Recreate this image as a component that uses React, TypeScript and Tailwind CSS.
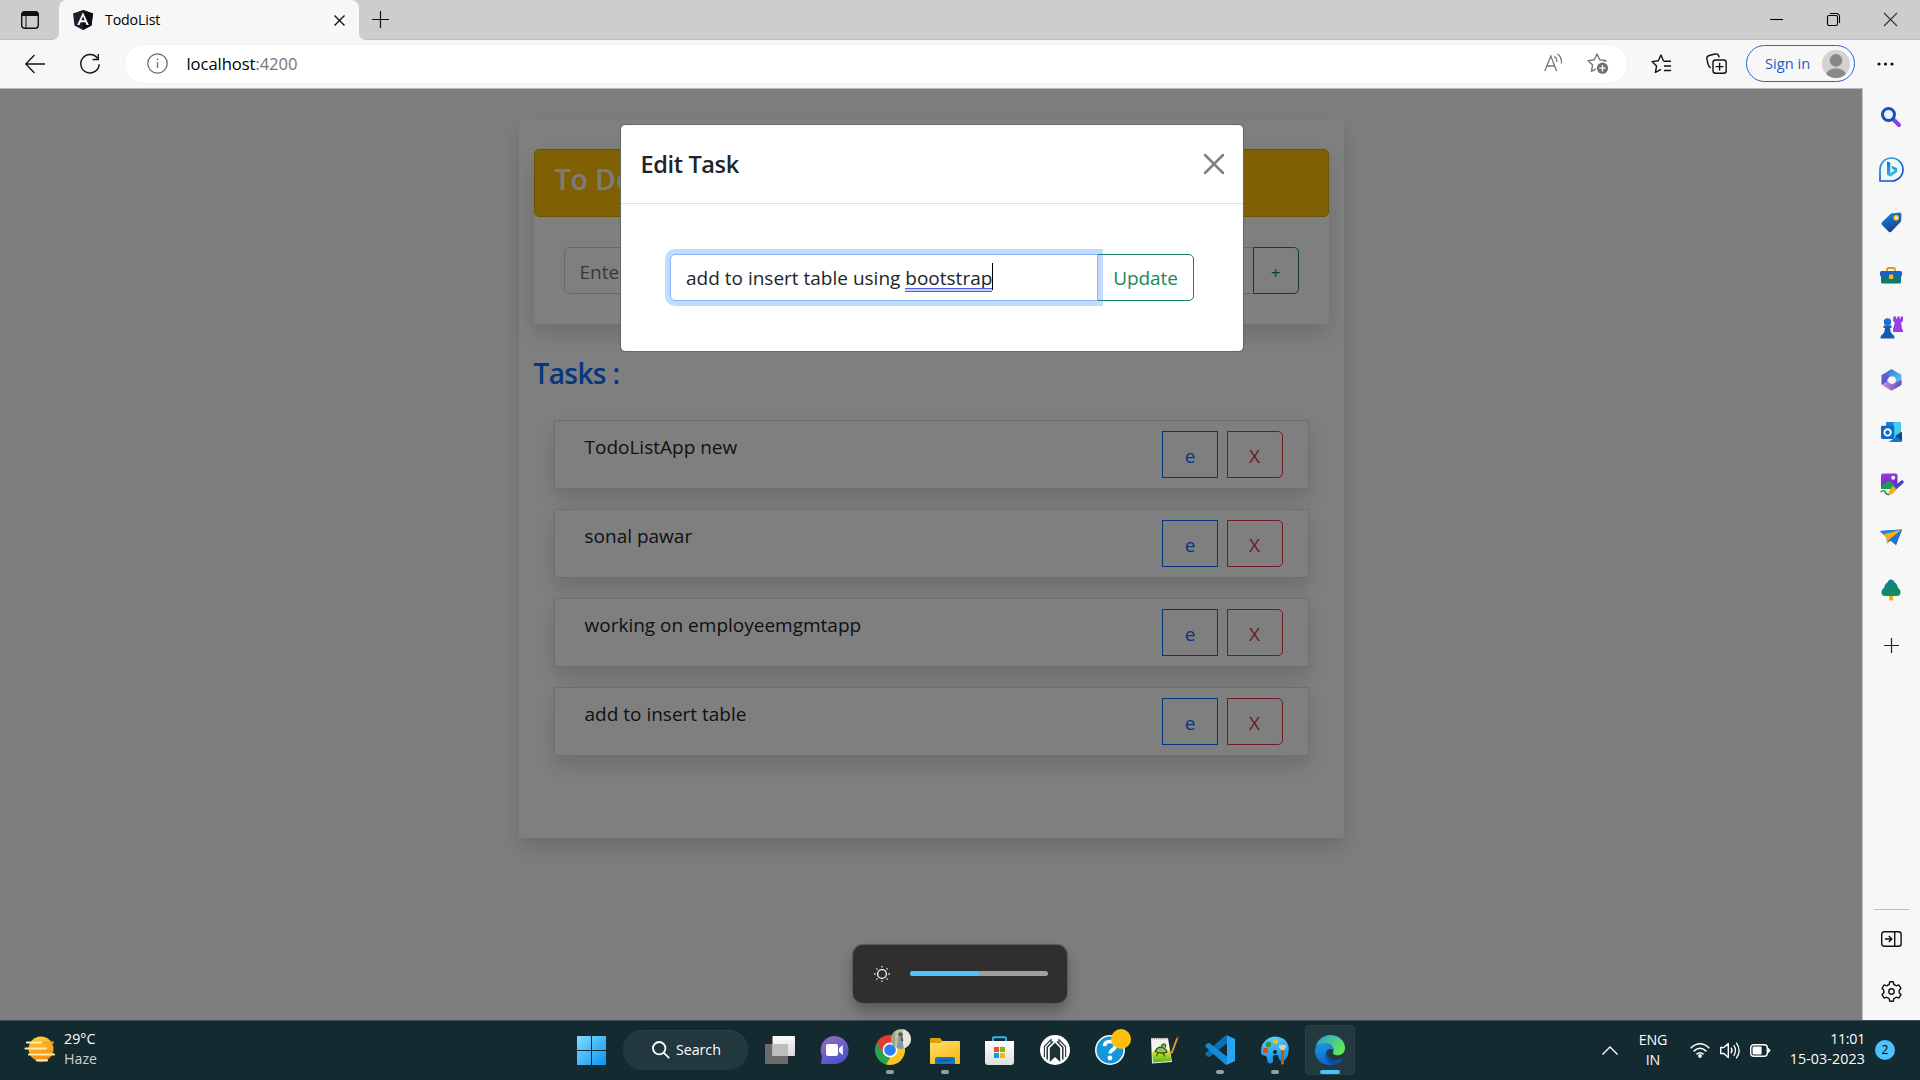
import React from "react";
import type { ReactNode } from "react";

type IconProps = { w: number; h?: number; vb?: string; className?: string; children: ReactNode };

function Icon({ w, h = w, vb, className = "", children }: IconProps) {
  return (
    <svg width={w} height={h} viewBox={vb ?? `0 0 ${w} ${h}`} fill="none" className={`block shrink-0 overflow-visible ${className}`}>
      {children}
    </svg>
  );
}

function Grad({ id, a, b, x2 = 1, y2 = 1 }: { id: string; a: string; b: string; x2?: number; y2?: number }) {
  return (
    <linearGradient id={id} x1="0" y1="0" x2={x2} y2={y2}>
      <stop stopColor={a} />
      <stop offset="1" stopColor={b} />
    </linearGradient>
  );
}

const STAR = "M10 1 L12.7 6.8 L19 7.6 L14.4 12 L15.6 18.4 L10 15.3 L4.4 18.4 L5.6 12 L1 7.6 L7.3 6.8 Z";

function TabStrip() {
  return (
    <div className="flex h-10 shrink-0 items-stretch bg-[#cdcdcd] shadow-[inset_0_-1px_0_#bdbdbd]">
      <div className="flex w-[59px] items-center pl-[21px]">
        <Icon w={18}>
          <rect x="0.7" y="0.7" width="16.6" height="16.6" rx="3" stroke="#111" strokeWidth="1.4" />
          <path d="M0.5 5V3.5A3 3 0 0 1 3.5 0.5h11a3 3 0 0 1 3 3V5Z" fill="#111" />
          <path d="M5 5v12" stroke="#111" strokeWidth="1" />
        </Icon>
      </div>
      <div className="relative flex w-[300px] items-center rounded-t-[8px] bg-[#f7f7f7] pl-[14px] pr-[14px]">
        <div className="absolute bottom-0 -left-[6px] size-[6px] bg-[radial-gradient(circle_at_0_0,#cdcdcd_5.5px,#f7f7f7_6px)]" />
        <div className="absolute -right-[6px] bottom-0 size-[6px] bg-[radial-gradient(circle_at_100%_0,#cdcdcd_5.5px,#f7f7f7_6px)]" />
        <Icon w={20}>
          <path d="M10 0 L20 3.4 L18.5 15.6 L10 20 L1.5 15.6 L0 3.4 Z" fill="#1c1f2b" />
          <path d="M10 0 L20 3.4 L18.5 15.6 L10 20 Z" fill="#0c0e16" />
          <path fillRule="evenodd" d="M10 2.2 L4.2 15 H6.5 L7.6 12.2 H12.4 L13.5 15 H15.8 Z M10 6.3 L11.6 10.3 H8.4 Z" fill="#fff" />
        </Icon>
        <span className="ml-[12px] flex-1 text-[14.2px] leading-5 tracking-[-0.15px] text-black">TodoList</span>
        <Icon w={11} className="mt-px">
          <path d="M0.5 0.5 L10.5 10.5 M10.5 0.5 L0.5 10.5" stroke="#111" strokeWidth="1.4" />
        </Icon>
      </div>
      <div className="flex flex-1 items-center pb-px pl-[13px]">
        <Icon w={17}>
          <path d="M8.5 0V17 M0 8.5H17" stroke="#111" strokeWidth="1.2" />
        </Icon>
      </div>
      <div className="flex items-center gap-[44px] pb-px pr-[23px]">
        <Icon w={13}>
          <path d="M0 6.5H13" stroke="#000" strokeWidth="1.1" />
        </Icon>
        <Icon w={13}>
          <rect x="0.5" y="2.5" width="10" height="10" rx="1.5" stroke="#000" strokeWidth="1.1" />
          <path d="M3 0.5H9.5A3 3 0 0 1 12.5 3.5V10" stroke="#000" strokeWidth="1.1" />
        </Icon>
        <Icon w={13}>
          <path d="M0 0 L13 13 M13 0 L0 13" stroke="#333" strokeWidth="1.1" />
        </Icon>
      </div>
    </div>
  );
}

function Toolbar() {
  return (
    <div className="flex h-12 shrink-0 items-start bg-[#f7f7f7] pl-[25px] pt-[5px]">
      <div className="flex h-[38px] items-center pb-px">
        <Icon w={20}>
          <path d="M20 10H1 M9.5 1 L0.8 10 L9.5 19" stroke="#111" strokeWidth="1.3" />
        </Icon>
        <Icon w={20} className="ml-[35px]">
          <path d="M17.5 4.4A9.2 9.2 0 1 0 19.2 10.2" stroke="#111" strokeWidth="1.4" />
          <path d="M18.3 0V5.5H12.6" stroke="#111" strokeWidth="1.4" />
        </Icon>
      </div>
      <div className="ml-[25px] flex h-[38px] w-[1502px] items-center rounded-full bg-white pb-px pl-[22px] pr-[18px] shadow-[0_0_3px_rgba(0,0,0,0.06)]">
        <Icon w={21}>
          <circle cx="10.5" cy="10.5" r="9.7" stroke="#6b6b6b" strokeWidth="1.3" />
          <path d="M10.5 9.2V15" stroke="#6b6b6b" strokeWidth="1.3" />
          <circle cx="10.5" cy="6.3" r="0.9" fill="#6b6b6b" />
        </Icon>
        <span className="ml-[18.5px] flex-1 text-[16.6px] leading-6 tracking-[-0.07px] text-black">
          localhost<span className="text-[#767676]">:4200</span>
        </span>
        <Icon w={19}>
          <path d="M0.8 17 L6.8 2 L12.6 17 M3 12H10.6" stroke="#767676" strokeWidth="1.3" />
          <path d="M10.3 2.2Q13 4 12.8 8 M13.5 0Q17.8 3 17.5 9.5" stroke="#767676" strokeWidth="1.3" />
        </Icon>
        <Icon w={22} h={21} className="ml-[24.5px]">
          <path d={STAR} stroke="#767676" strokeWidth="1.4" strokeLinejoin="round" />
          <circle cx="15.5" cy="15.2" r="6.8" fill="#fff" />
          <circle cx="15.5" cy="15.2" r="5.6" fill="#707070" />
          <path d="M15.5 12V18.4 M12.3 15.2H18.7" stroke="#fff" strokeWidth="1.3" />
        </Icon>
      </div>
      <div className="flex h-[38px] items-center pb-px">
        <Icon w={21} h={20} className="ml-[24px]">
          <path d="M13 6.8L12.4 6.8L10 1L7.3 6.8L1 7.6L5.6 12L4.4 18.4L10 15.3" stroke="#111" strokeWidth="1.4" strokeLinejoin="round" />
          <path d="M13 7.3H20 M13 12H20 M13 16.5H20" stroke="#111" strokeWidth="1.4" />
        </Icon>
        <Icon w={21} h={21} className="ml-[33.5px]">
          <path d="M4.8 14.8C3 14 2.6 13 2.2 11.5L0.9 6C0.5 4 1.4 3 3.2 2.5L9 1C11.4 0.4 12.5 1.5 13.2 4.5" stroke="#111" strokeWidth="1.4" />
          <rect x="7" y="7" width="13.2" height="13.2" rx="2.5" stroke="#111" strokeWidth="1.4" />
          <path d="M13.6 9.7V17.5 M9.7 13.6H17.5" stroke="#111" strokeWidth="1.4" />
        </Icon>
        <div className="ml-[19.5px] flex h-[37px] w-[109px] items-center rounded-full border-[1.5px] border-[#2c66c9] pl-[18px]">
          <span className="-mt-px text-[14.6px] leading-5 tracking-[0.05px] text-[#1b5ac6]">Sign in</span>
          <Icon w={28} className="ml-[12px]">
            <clipPath id="avatar"><circle cx="14" cy="14" r="14" /></clipPath>
            <g clipPath="url(#avatar)">
              <rect width="28" height="28" fill="#d4d2d0" />
              <circle cx="14" cy="10.4" r="6.3" fill="#8a8886" />
              <ellipse cx="14" cy="25.3" rx="9.8" ry="7" fill="#8a8886" />
            </g>
          </Icon>
        </div>
        <Icon w={17} h={4} className="ml-[21.5px]">
          <circle cx="2" cy="2" r="1.6" fill="#111" />
          <circle cx="8.5" cy="2" r="1.6" fill="#111" />
          <circle cx="15" cy="2" r="1.6" fill="#111" />
        </Icon>
      </div>
    </div>
  );
}

const TASKS = ["TodoListApp new", "sonal pawar", "working on employeemgmtapp", "add to insert table"];

function TodoPage() {
  return (
    <div className="mx-auto mt-[30px] h-[719px] w-[825px] bg-white px-[15px] pt-[30px] shadow-[0_10px_20px_rgba(0,0,0,0.15)]">
      <div className="shadow-[0_10px_20px_rgba(0,0,0,0.15)]">
        <div className="h-[68px] rounded-[5px] border border-[#dfa800] bg-[#ffc107] pl-5 pt-[11px] text-[28.5px] font-semibold leading-9 tracking-[-0.1px] text-[#f8f9fa]">
          To Do
        </div>
        <div className="flex h-[107px] bg-white p-[30px]">
          <div className="flex h-[47px] flex-1 items-center rounded-l-[5px] border border-[#ced4da] pl-[15px] pt-[3px] text-[19px] text-[#6c757d]">
            Enter
          </div>
          <div className="-ml-px flex h-[47px] w-[46px] items-center justify-center rounded-r-[5px] border border-[#198754] pt-[5px] text-[17px] text-[#198754]">
            +
          </div>
        </div>
      </div>
      <h4 className="mt-[31px] text-[28px] font-semibold leading-9 tracking-[-0.6px] text-[#0d6efd]">Tasks :</h4>
      <div className="mt-[29px] flex flex-col gap-5 px-5">
        {TASKS.map((task) => (
          <div key={task} className="flex h-[69px] items-start border border-[#dfdfdf] bg-white pl-[30px] pr-[25px] pt-[10px] shadow-[0_10px_20px_rgba(0,0,0,0.15)]">
            <span className="mt-[0.5px] flex-1 text-[19px] leading-[30px] text-[#212529]">{task}</span>
            <div className="flex gap-[9px] text-[19px]">
              <div className="flex h-[47px] w-[56px] items-center justify-center border border-[#0d6efd] pl-px pt-[3.5px] text-[#0d6efd]">e</div>
              <div className="flex h-[47px] w-[56px] items-center justify-center rounded-r-[5px] border border-[#dc3545] pt-[3.5px] text-[#dc3545]">X</div>
            </div>
          </div>
        ))}
      </div>
    </div>
  );
}

function EditDialog() {
  return (
    <div className="w-[624px] overflow-hidden rounded-[5px] border border-[#666] bg-white bg-clip-padding">
      <div className="flex h-[79px] items-center justify-between border-b border-[#dee2e6] pl-[19.5px] pr-[19.5px]">
        <h5 className="pt-[2px] text-[23.6px] font-semibold tracking-[-0.4px] text-[#212529]">Edit Task</h5>
        <Icon w={20}>
          <path d="M1 1 L19 19 M19 1 L1 19" stroke="#7f7f7f" strokeWidth="2.5" strokeLinecap="round" />
        </Icon>
      </div>
      <div className="flex h-[147px] items-start px-[49px] pt-[50px]">
        <div className="relative z-10 flex h-[47px] flex-1 items-center rounded-l-[5px] border border-[#86b7fe] bg-white pl-[15px] pt-[1.5px] text-[19px] text-[#212529] shadow-[0_0_0_5px_rgba(13,110,253,0.25)]">
          <span className="whitespace-pre">add to insert table using </span>
          <span className="relative">
            bootstrap
            <span className="absolute bottom-[1px] left-0 h-[4px] w-full border-y border-[#4a63e8] bg-[#4a63e8]/30" />
          </span>
          <span className="-mt-[4px] h-[27px] w-px bg-black" />
        </div>
        <div className="-ml-px flex h-[47px] w-[97px] items-center justify-center rounded-r-[5px] border border-[#198754] pt-[1.5px] text-[19px] tracking-[-0.1px] text-[#198754]">
          Update
        </div>
      </div>
    </div>
  );
}

function Cell({ children }: { children: ReactNode }) {
  return <div className="flex h-[52.5px] items-center justify-center">{children}</div>;
}

function Sidebar() {
  return (
    <div className="flex w-[58px] shrink-0 flex-col border-l border-[#c4c4c4] bg-[#f7f7f7] pr-px pt-[3px]">
      <Cell>
        <Icon w={20}>
          <path d="M13 13L18 18" stroke="#8b3fe8" strokeWidth="4" strokeLinecap="round" />
          <circle cx="7.5" cy="7.5" r="6" stroke="#1650b8" strokeWidth="3" fill="#e8f4ff" />
        </Icon>
      </Cell>
      <Cell>
        <Icon w={25}>
          <defs><Grad id="bing" a="#27a7e8" b="#1b4ec4" x2={0.4} /><Grad id="bingb" a="#1c62d8" b="#35c1ee" x2={0.2} /></defs>
          <path d="M1 24V12.5A11.5 11.5 0 1 1 12.5 24Z" fill="#eefaff" stroke="url(#bing)" strokeWidth="1.7" strokeLinejoin="round" />
          <path d="M8 4.5L11.3 5.8V16L16 13.5L13.6 12.3L12.2 8.8L18.2 11.2V15L11.3 19.8L8 17.8Z" fill="url(#bingb)" />
        </Icon>
      </Cell>
      <Cell>
        <Icon w={21}>
          <defs><Grad id="tag" a="#1b8be0" b="#14419c" x2={0.4} /></defs>
          <path d="M10 1.5L18.5 0.5Q20.5 0.4 20.5 2.5L20 9.5L10.5 19.6Q9.2 21 7.8 19.7L1 13Q-0.3 11.5 1 10.2Z" fill="url(#tag)" />
          <circle cx="15.2" cy="5.8" r="2.2" fill="#f7f7f7" stroke="#f5b800" strokeWidth="1.4" />
        </Icon>
      </Cell>
      <Cell>
        <Icon w={22} h={17} className="mt-[2px]">
          <path d="M7 5V2.5Q7 1 8.5 1H13.5Q15 1 15 2.5V5" stroke="#e59a16" strokeWidth="1.8" />
          <rect x="1" y="4.5" width="20" height="12" rx="1.5" fill="#0c7a6c" />
          <rect x="0" y="4" width="22" height="5.5" rx="1.5" fill="#1c5fcb" />
          <rect x="9" y="7.5" width="4.2" height="4.5" rx="1" fill="#ffb91d" />
        </Icon>
      </Cell>
      <Cell>
        <Icon w={23} h={23}>
          <path d="M13.5 0.5H16V2.5H17.2V0.5H19.6V2.5H20.8V0.5H23V5L21.2 6.5L22 13.5H23V16H13V13.5L14.8 6.5L13 5Z" fill="#9a3fe8" />
          <circle cx="7.5" cy="6" r="3.7" fill="#1d6fd4" />
          <path d="M3.5 9.5H11.5V12H10Q10 16 12.5 18.5Q14.5 19 14.5 22.5H0.5Q0.5 19 2.5 18.5Q5 16 5 12H3.5Z" fill="#1659b5" />
        </Icon>
      </Cell>
      <Cell>
        <Icon w={21} h={22}>
          <defs><Grad id="m3a" a="#2b79cf" b="#65d2f5" /><Grad id="m3b" a="#7d63d8" b="#3e55be" x2={0.1} /><Grad id="m3c" a="#d39ae6" b="#7052b8" x2={0.9} y2={0.1} /></defs>
          <path d="M0.5 6L10.5 0.2L13.5 2L11 8L6.5 10V18L0.5 15.5Z" fill="url(#m3b)" />
          <path d="M7 2.2L10.5 0.2L20.5 5.8V15.5L14.5 13V9L7 6Z" fill="url(#m3a)" />
          <path d="M0.5 15.8L7 11.8L11 15L20.5 11V16L10.5 21.8Z" fill="url(#m3c)" />
          <path d="M8.5 7.5H13L15 11L12.8 14.5H8.5L6.5 11Z" fill="#f7f7f7" />
        </Icon>
      </Cell>
      <Cell>
        <Icon w={21} h={20}>
          <rect x="5" y="0" width="15" height="15" rx="1" fill="#50c8f4" />
          <path d="M5 0H12.5V8H5Z" fill="#1683d4" />
          <path d="M8 20L21 10V19Q21 20 20 20Z" fill="#1c74ca" />
          <path d="M14 14L21 9.5V19Z" fill="#0b4d95" />
          <rect x="0" y="3.8" width="13.2" height="13.2" rx="1.4" fill="#0a6cc6" />
          <circle cx="6.6" cy="10.4" r="3.2" stroke="#fff" strokeWidth="1.9" />
        </Icon>
      </Cell>
      <Cell>
        <Icon w={23} h={23}>
          <defs><Grad id="pic" a="#a33be8" b="#6a22c8" x2={0.3} /></defs>
          <rect x="1" y="0.5" width="16.5" height="15.5" rx="2" fill="url(#pic)" />
          <path d="M1 13.5L7 8.5Q8.7 7.3 10.5 8.5L16 13.5V16H1Z" fill="#1b9e52" />
          <circle cx="13.2" cy="4.8" r="2" fill="#fff" />
          <path d="M13 17L22 9" stroke="#4242c8" strokeWidth="3.5" strokeLinecap="round" />
          <path d="M16 15.5L13 13L9.5 17Q9 20.5 6.5 21.5Q13 23.5 16 15.5Z" fill="#f5ad1c" />
          <path d="M0.5 19Q4 16.5 5 18.5Q5.5 21 9 22" stroke="#168848" strokeWidth="1.3" />
        </Icon>
      </Cell>
      <Cell>
        <Icon w={22} h={16}>
          <path d="M0 2L22 0.5L16 16L10.5 11.5L7 14.5L6.5 8.5Z" fill="#1765c0" />
          <path d="M0 2L22 0.5L6.5 8.5Z" fill="#2182d8" />
          <path d="M3 5.5L22 0.5L9.5 10.5L7 14.5L6.5 8.5Z" fill="#f7af20" />
          <path d="M9.5 10.5L22 0.5L16 16Z" fill="#1975d2" />
        </Icon>
      </Cell>
      <Cell>
        <Icon w={20} h={22}>
          <defs><Grad id="tree" a="#1479a8" b="#119057" x2={0.5} /></defs>
          <rect x="8.2" y="15" width="3.8" height="6.5" rx="1" fill="#f5a71c" />
          <path d="M10 0.5Q12.5 0.5 13.5 3.5Q16.5 5 16.5 8Q19.5 10.5 19.5 13.5Q19.5 17 15.5 17H4.5Q0.5 17 0.5 13.5Q0.5 10.5 3.5 8Q3.5 5 6.5 3.5Q7.5 0.5 10 0.5Z" fill="url(#tree)" />
        </Icon>
      </Cell>
      <div className="mt-[3px]">
        <Cell>
          <Icon w={15}>
            <path d="M7.5 0V15 M0 7.5H15" stroke="#222" strokeWidth="1.2" />
          </Icon>
        </Cell>
      </div>
      <div className="flex-1" />
      <div className="mx-auto h-px w-[35px] bg-[#bdbdbd]" />
      <div className="flex h-[58px] items-center justify-center">
        <Icon w={21} h={16}>
          <rect x="0.7" y="0.7" width="19.4" height="14.6" rx="2.5" stroke="#111" strokeWidth="1.4" />
          <path d="M13.7 1V15 M4 8H10.3 M7.8 5L10.8 8L7.8 11" stroke="#111" strokeWidth="1.4" />
        </Icon>
      </div>
      <div className="mb-[6px] flex h-[46px] items-center justify-center">
        <Icon w={21} vb="0 0 21 21">
          <path d="M8.7 0.8H12.3L12.9 3.5Q14.3 4 15.2 4.8L17.8 3.9L20 7.3L18.2 9.3V11.7L20 13.7L17.8 17.1L15.2 16.2Q14.3 17 12.9 17.5L12.3 20.2H8.7L8.1 17.5Q6.7 17 5.8 16.2L3.2 17.1L1 13.7L2.8 11.7V9.3L1 7.3L3.2 3.9L5.8 4.8Q6.7 4 8.1 3.5Z" stroke="#111" strokeWidth="1.4" strokeLinejoin="round" />
          <circle cx="10.5" cy="10.5" r="2.7" stroke="#111" strokeWidth="1.4" />
        </Icon>
      </div>
    </div>
  );
}

function TaskbarApp({ children, state = "idle" }: { children: ReactNode; state?: "idle" | "open" | "active" }) {
  return (
    <div className={`flex h-[50px] w-[50px] flex-col items-center rounded-[5px] pt-[10px] ${state === "active" ? "bg-[#22393f] shadow-[inset_0_0_0_1px_#2c4147]" : ""}`}>
      <div className="flex h-[30px] w-[30px] items-center justify-center">{children}</div>
      {state === "open" && <div className="mt-[5px] h-1 w-2 rounded-full bg-[#95a0a3]" />}
      {state === "active" && <div className="mt-[5px] h-1 w-5 rounded-full bg-[#4cc2ff]" />}
    </div>
  );
}

function Taskbar() {
  return (
    <div className="flex h-[60px] shrink-0 items-center border-t border-[#3d5055] bg-[#122a30] pb-px text-[14.25px] text-white">
      <div className="flex w-[562px] items-center pb-[2px] pl-[25px]">
        <Icon w={31} h={28}>
          <defs><Grad id="haze" a="#ffd23c" b="#f28c12" x2={0.2} /></defs>
          <circle cx="16" cy="14" r="12.5" fill="url(#haze)" />
          <path d="M2 7.5H16 M0.5 13.5H21 M4 19.5H29 M12 25.3H22" stroke="#ffe9a8" strokeWidth="2.2" strokeLinecap="round" />
          <path d="M19 7.5H28" stroke="#f4a31b" strokeWidth="2" strokeLinecap="round" />
        </Icon>
        <div className="ml-2 flex flex-col leading-5">
          <span>29°C</span>
          <span className="text-[#c9d0d2]">Haze</span>
        </div>
      </div>
      <div className="flex items-center">
        <div className="flex w-[59px] justify-center">
          <Icon w={29}>
            <defs><Grad id="win" a="#7fdcff" b="#0b93f5" /></defs>
            <path d="M0 0H14V14H0Z M15 0H29V14H15Z M0 15H14V29H0Z M15 15H29V29H15Z" fill="url(#win)" />
          </Icon>
        </div>
        <div className="ml-[2px] flex h-10 w-[125px] items-center rounded-full bg-[#21383e] pl-[29px] shadow-[inset_0_1px_0_#2d4349]">
          <Icon w={18}>
            <circle cx="7.2" cy="7.2" r="6.2" stroke="#fff" strokeWidth="1.8" />
            <path d="M11.7 11.7L17.2 17.2" stroke="#fff" strokeWidth="1.8" />
          </Icon>
          <span className="ml-[6px] tracking-[-0.05px]">Search</span>
        </div>
      </div>
      <div className="ml-[7px] flex gap-[5px]">
        <TaskbarApp>
          <Icon w={30} h={28}>
            <defs><Grad id="tv" a="#fff" b="#dcdcdc" x2={0.2} /></defs>
            <rect x="0" y="8" width="23" height="20" rx="1" fill="#6b6b6b" />
            <rect x="7.5" y="0" width="22.5" height="20" rx="1" fill="url(#tv)" />
            <path d="M7.5 8H23V20H7.5Z" fill="#bdbdbd" />
          </Icon>
        </TaskbarApp>
        <TaskbarApp>
          <Icon w={29} h={28} className="-ml-px">
            <defs><Grad id="chat" a="#9a70b8" b="#4c52d0" x2={0.6} /></defs>
            <path d="M1 28L2 20A14 14 0 1 1 14.5 28Z" fill="url(#chat)" />
            <rect x="6" y="8" width="12" height="12" rx="2" fill="#fff" />
            <path d="M19 12.2L22.8 9V19L19 15.8Z" fill="#fff" />
          </Icon>
        </TaskbarApp>
        <TaskbarApp state="open">
          <div className="relative">
            <Icon w={30}>
              <path d="M15 15L2 7.5A15 15 0 0 1 28 7.5Z" fill="#e33b2e" />
              <path d="M15 15L28 7.5A15 15 0 0 1 15 30Z" fill="#fcc31e" />
              <path d="M15 15L15 30A15 15 0 0 1 2 7.5Z" fill="#2ba24c" />
              <path d="M2 7.5L8.5 18.8L15 8H28A15 15 0 0 0 2 7.5Z" fill="#e33b2e" />
              <path d="M21.5 18.8L15 30L11 29.5L17 20Z" fill="#fcc31e" />
              <circle cx="15" cy="15" r="7.4" fill="#fff" />
              <circle cx="15" cy="15" r="5.8" fill="#2f7df0" />
            </Icon>
            <div className="absolute -top-[6px] left-4 size-5">
              <Icon w={20}>
                <clipPath id="profile"><circle cx="10" cy="10" r="10" /></clipPath>
                <g clipPath="url(#profile)">
                  <rect width="20" height="20" fill="#b9c2a4" />
                  <rect x="12" width="8" height="20" fill="#e6e6e2" />
                  <rect width="4" height="20" fill="#98a585" />
                  <circle cx="9.5" cy="5.5" r="2.3" fill="#6b5650" />
                  <path d="M7 8H12V15L13 20H6Z" fill="#8399a8" />
                  <path d="M10.5 6L12.4 12H10.4Z" fill="#4a3a38" />
                </g>
              </Icon>
            </div>
          </div>
        </TaskbarApp>
        <TaskbarApp state="open">
          <Icon w={30} h={28} className="mt-px">
            <defs><Grad id="folder" a="#ffdf6b" b="#f9b91c" x2={0.6} /></defs>
            <path d="M0 2Q0 1 1 1H10L12.5 4H16V9H0Z" fill="#e09f04" />
            <path d="M0 6H10.5L13 4H29Q30 4 30 5V26Q30 27 29 27H1Q0 27 0 26Z" fill="url(#folder)" />
            <path d="M5 27V22Q5 20 7 20H23Q25 20 25 22V27Z" fill="#0b76cc" />
            <path d="M8.5 23.5H21.5" stroke="#0c4f96" strokeWidth="1.3" />
          </Icon>
        </TaskbarApp>
        <TaskbarApp>
          <Icon w={29} h={29} className="-ml-px">
            <defs><Grad id="store" a="#fff" b="#dedede" x2={0} /></defs>
            <path d="M8 5V2Q8 1.2 8.8 1.2H20.2Q21 1.2 21 2V5" stroke="#2fb5f0" strokeWidth="1.9" />
            <path d="M0 5H29V26Q29 29 26 29H3Q0 29 0 26Z" fill="url(#store)" />
            <path d="M9 11H14V16H9Z" fill="#f25022" />
            <path d="M15 11H20V16H15Z" fill="#7fba00" />
            <path d="M9 17H14V22H9Z" fill="#00a4ef" />
            <path d="M15 17H20V22H15Z" fill="#ffb900" />
          </Icon>
        </TaskbarApp>
        <TaskbarApp>
          <Icon w={30}>
            <circle cx="15" cy="15" r="15" fill="#fff" />
            <path d="M4.4 22V11.5L11 4.6V7.8 M25.6 22V11.5L19 4.6V7.8" stroke="#22383e" strokeWidth="1.1" />
            <path d="M7.2 24.5V12.3L13 6.5 M22.8 24.5V12.3L17 6.5" stroke="#22383e" strokeWidth="1.5" />
            <path d="M9.8 27V13L15 7.8L20.2 13V27L15 22Z" fill="#1c3238" />
          </Icon>
        </TaskbarApp>
        <TaskbarApp>
          <div className="relative">
            <Icon w={30}>
              <circle cx="15" cy="15" r="14.2" fill="#1496db" stroke="#f3f8fb" strokeWidth="1.6" />
              <path d="M9.5 11.2Q9.8 6.5 15 6.5Q20.3 6.5 20.3 10.8Q20.3 13.4 17 15.2Q15.3 16.2 15.2 18.5" stroke="#fff" strokeWidth="3.6" />
              <circle cx="15" cy="23" r="2.4" fill="#fff" />
            </Icon>
            <div className="absolute -top-[6px] left-4 size-5 rounded-full bg-[#ffbf0f]" />
          </div>
        </TaskbarApp>
        <TaskbarApp>
          <Icon w={30} h={30} className="-ml-[2px]">
            <defs><Grad id="npp" a="#f5e629" b="#42b81c" x2={0} /></defs>
            <path d="M2 3H19L23 27L3 28.5Z" fill="#f4f4ee" />
            <path d="M3 17L21 15L22 26L4 27.5Z" fill="url(#npp)" />
            <path d="M2.5 3.5H18.5" stroke="#888" strokeWidth="1.6" strokeDasharray="1.2 1" />
            <path d="M6 16.5Q9 11 13 12.5Q17 13 18 17Q13 19.5 6 16.5Z M13 12Q12 8.5 15.5 9Q17.5 10 16 12.5" stroke="#1f4a14" strokeWidth="1.1" fill="#8cc65a" />
            <path d="M9 18L7.5 21 M14 18.5L16 21.5" stroke="#1f4a14" strokeWidth="1.1" />
            <path d="M28.5 2.5L22.5 18.5" stroke="#e4992a" strokeWidth="1.9" />
            <path d="M29.3 0.5L28.2 3.5" stroke="#7d2d24" strokeWidth="1.9" />
          </Icon>
        </TaskbarApp>
        <TaskbarApp state="open">
          <Icon w={30}>
            <path d="M22 0.3V8.5L4.5 21.8Q3.5 22.4 2.6 21.7L0.7 20Q-0.2 19 0.7 18.1L20 0.8Q21 0 22 0.3Z" fill="#0b6fb8" />
            <path d="M22 29.7V21.5L4.5 8.2Q3.5 7.6 2.6 8.3L0.7 10Q-0.2 11 0.7 11.9L20 29.2Q21 30 22 29.7Z" fill="#148bd8" />
            <path d="M22 0.3L30 4V26L22 29.7Z" fill="#27a4f2" />
          </Icon>
        </TaskbarApp>
        <TaskbarApp state="open">
          <Icon w={30} h={30}>
            <defs><Grad id="paint" a="#62d6f7" b="#1a8fe0" x2={0.3} /></defs>
            <path d="M1 17Q1 7 9 3Q17 -0.5 24 4Q30 9 28.5 17Q27.5 25 22.5 26Q19 26.5 18.5 22Q17.8 19 14.5 20Q12 21 13 24Q14 28 10.5 28.5Q7 28.5 7 23Q6.8 20.5 4 20.5Q1 20 1 17Z" fill="url(#paint)" />
            <circle cx="5.5" cy="15.5" r="2.7" fill="#d94f22" />
            <circle cx="8.5" cy="9.5" r="2.7" fill="#279c32" />
            <circle cx="15.5" cy="6.5" r="2.6" fill="#fdb515" />
            <circle cx="15" cy="17" r="2" fill="#0e2a33" />
            <path d="M19 10H26V12.5L24 15H21L19 12.5Z" fill="#e8c9a0" />
            <path d="M21 15H24V29Q22.5 30 21 29Z" fill="#b3620f" />
          </Icon>
        </TaskbarApp>
        <TaskbarApp state="active">
          <Icon w={30}>
            <defs>
              <Grad id="e1" a="#2597e6" b="#62e65c" y2={0.5} />
              <Grad id="e2" a="#1d9ae8" b="#0c63c8" x2={0.4} />
            </defs>
            <path d="M0.5 12C2 5 8 0 15 0C24 0 30 6 30 13C30 18 26 20.5 22 20.3C18.5 20 17.3 18.5 18.3 16.5C19.5 14 17 9 12 8.5C6 8 2 10 0.5 12Z" fill="url(#e1)" />
            <path d="M0 15.5C0 11 4.5 8 9.5 8C15 8.3 19 12 18.4 16C17.5 13.5 12.5 13 11.2 17.5C10 22 16 27 22 26C25 25.5 27 24 28 24C25 28 20 30 15 30C6 30 0 24 0 15.5Z" fill="url(#e2)" />
            <path d="M11.2 16.5C8.5 23 13 28.5 18 29.7C22.5 28.8 26 26.5 28 23.5C27 23 24 25 21 25C16 25 12 21.5 11.2 16.5Z" fill="#0c4fa0" />
          </Icon>
        </TaskbarApp>
      </div>
      <div className="flex-1" />
      <Icon w={16} h={9}>
        <path d="M0.5 8.5L8 1L15.5 8.5" stroke="#fff" strokeWidth="1.3" />
      </Icon>
      <div className="ml-[20px] flex w-[30px] flex-col items-center leading-5">
        <span className="tracking-[-0.15px]">ENG</span>
        <span>IN</span>
      </div>
      <Icon w={20} h={15} className="ml-[22px]">
        <path d="M0.7 5.2Q10 -3.6 19.3 5.2 M3.6 8.4Q10 2.2 16.4 8.4 M6.5 11.4Q10 8 13.5 11.4" stroke="#fff" strokeWidth="1.5" />
        <circle cx="10" cy="13" r="1.9" fill="#fff" />
      </Icon>
      <Icon w={20} h={17} className="ml-[10px]">
        <path d="M0.7 5.5H3.8L8.3 1.5V15.5L3.8 11.5H0.7Z" stroke="#fff" strokeWidth="1.4" strokeLinejoin="round" />
        <path d="M11 5.7Q13 8.5 11 11.3 M13.7 3.2Q17.3 8.5 13.7 13.8 M16.2 0.6Q22 8.5 16.2 16.4" stroke="#fff" strokeWidth="1.3" />
      </Icon>
      <Icon w={20} h={13} className="ml-[10px]">
        <rect x="0.7" y="0.7" width="16.6" height="11.6" rx="3" stroke="#fff" strokeWidth="1.4" />
        <rect x="2.6" y="2.6" width="9" height="7.8" rx="1" fill="#fff" />
        <path d="M18 4.5Q20 5 20 6.5Q20 8 18 8.5Z" fill="#fff" stroke="#fff" />
      </Icon>
      <div className="ml-[10px] flex w-[85px] flex-col items-end pb-[2px] leading-5">
        <span className="tracking-[-0.3px]">11:01</span>
        <span className="tracking-[0.1px]">15-03-2023</span>
      </div>
      <div className="ml-[10px] mr-[25px] flex size-5 items-center justify-center rounded-full bg-[#4cc2ff] text-[12px] text-black">2</div>
    </div>
  );
}

function BrightnessFlyout() {
  return (
    <div className="absolute left-[853px] top-[945px] flex h-[58px] w-[214px] items-center rounded-[10px] bg-[#2f2f2f] pl-[21px] shadow-[0_0_0_1px_#5c5c5c,0_8px_16px_rgba(0,0,0,0.3)]">
      <Icon w={16}>
        <circle cx="8" cy="8" r="4.4" stroke="#fff" strokeWidth="1.3" />
        <path d="M8 0V1.6 M8 14.4V16 M0 8H1.6 M14.4 8H16 M2.4 2.4L3.5 3.5 M12.5 12.5L13.6 13.6 M2.4 13.6L3.5 12.5 M12.5 3.5L13.6 2.4" stroke="#ddd" strokeWidth="1.3" />
      </Icon>
      <div className="-mt-px ml-5 h-[5px] w-[138px] overflow-hidden rounded-full bg-[#9f9f9f]">
        <div className="h-full w-1/2 rounded-full bg-[#4cc2ff]" />
      </div>
    </div>
  );
}

export default function App() {
  return (
    <div className="relative flex h-[1080px] w-[1920px] flex-col overflow-hidden bg-[#f7f7f7] font-['Open_Sans',sans-serif]">
      <TabStrip />
      <Toolbar />
      <div className="flex min-h-0 flex-1">
        <div className="flex w-[1862px] flex-col border-t border-[#b9b9b9]">
          <div className="relative flex-1 bg-[#fafdfb]">
            <div className="flow-root">
              <TodoPage />
            </div>
            <div className="absolute inset-0 flex items-start justify-center bg-black/50 pl-[2px] pt-[35px]">
              <EditDialog />
            </div>
          </div>
        </div>
        <Sidebar />
      </div>
      <Taskbar />
      <BrightnessFlyout />
    </div>
  );
}
